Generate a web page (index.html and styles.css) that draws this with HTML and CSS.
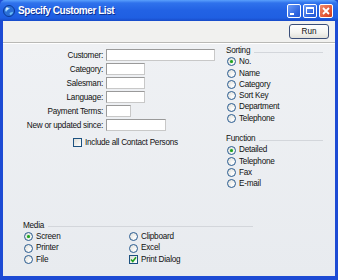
FILE: index.html
```html
<!DOCTYPE html>
<html lang="en">
<head>
  <meta charset="UTF-8" />
  <title>Specify Customer List</title>
  <link rel="stylesheet" href="styles.css">
</head>
<body>
  <div class="window">
    <div class="titlebar">
      <svg class="app-icon" width="12" height="12" viewBox="0 0 12 12">
        <circle cx="6" cy="6" r="5.5" fill="#2a6fd6" stroke="#0b3a99" stroke-width="1"/>
        <path d="M2 5 C3 3 5 2.5 7 3 C6 4.5 4 5 3 7 Z" fill="#8fd0ff"/>
        <path d="M6.5 8 C8 7 9.5 7.5 10 6.5 C10 8.5 8.5 10 7 10 Z" fill="#6cc0f5"/>
        <circle cx="4" cy="3.5" r="1.3" fill="#ffffff" opacity="0.7"/>
      </svg>
      <span class="title">Specify Customer List</span>
      <div class="caption-buttons">
        <span class="cap-btn"><span class="glyph-min"></span></span>
        <span class="cap-btn"><span class="glyph-max"></span></span>
        <span class="cap-btn close">
          <svg width="8" height="8" viewBox="0 0 8 8"><path d="M1 1 L7 7 M7 1 L1 7" stroke="#fff" stroke-width="1.8"/></svg>
        </span>
      </div>
    </div>

    <div class="client">
      <div class="toolbar">
        <button class="run">Run</button>
      </div>

      <div class="content">
        <div class="upper">
          <div class="fields">
            <div class="field-grid">
              <label>Customer:</label><input class="w-customer" type="text">
              <label>Category:</label><input class="w-short" type="text">
              <label>Salesman:</label><input class="w-short" type="text">
              <label>Language:</label><input class="w-short" type="text">
              <label>Payment Terms:</label><input class="w-tiny" type="text">
              <label>New or updated since:</label><input class="w-date" type="text">
            </div>
            <div class="check-row"><span class="checkbox"></span>Include all Contact Persons</div>
          </div>

          <div class="options">
            <div class="group">
              <div class="group-head">Sorting<span class="rule"></span></div>
              <div class="opt"><span class="radio on"></span>No.</div>
              <div class="opt"><span class="radio"></span>Name</div>
              <div class="opt"><span class="radio"></span>Category</div>
              <div class="opt"><span class="radio"></span>Sort Key</div>
              <div class="opt"><span class="radio"></span>Department</div>
              <div class="opt"><span class="radio"></span>Telephone</div>
            </div>
            <div class="group function">
              <div class="group-head">Function<span class="rule"></span></div>
              <div class="opt"><span class="radio on"></span>Detailed</div>
              <div class="opt"><span class="radio"></span>Telephone</div>
              <div class="opt"><span class="radio"></span>Fax</div>
              <div class="opt"><span class="radio"></span>E-mail</div>
            </div>
          </div>
        </div>

        <div class="media">
          <div class="group-head">Media<span class="rule"></span></div>
          <div class="media-grid">
            <div class="opt"><span class="radio on"></span>Screen</div>
            <div class="opt"><span class="radio"></span>Clipboard</div>
            <div class="opt"><span class="radio"></span>Printer</div>
            <div class="opt"><span class="radio"></span>Excel</div>
            <div class="opt"><span class="radio"></span>File</div>
            <div class="opt"><span class="checkbox checked">
              <svg width="7" height="7" viewBox="0 0 7 7"><path d="M1 3.5 L2.8 5.5 L6 1.2" fill="none" stroke="#21a121" stroke-width="1.6"/></svg>
            </span>Print Dialog</div>
          </div>
        </div>
      </div>
    </div>
  </div>
</body>
</html>
```

FILE: styles.css
```css
body {
  margin: 0;
  font-family: "Liberation Sans", Arial, sans-serif;
  font-size: 8.2px;
  letter-spacing: -0.25px;
  color: #111;
}
.window {
  width: 338px;
  height: 280px;
  display: flex;
  flex-direction: column;
  background: #1d4bd4;
}
.titlebar {
  height: 21px;
  display: flex;
  align-items: center;
  padding: 0 5px 0 3px;
  background: linear-gradient(#5aa0fc 0, #2f72ec 3px, #2262e4 50%, #1f5fe2 85%, #174ac8 100%);
  border-radius: 5px 5px 0 0;
}
.app-icon {
  flex: none;
  margin-right: 3px;
}
.title {
  flex: 1;
  color: #fff;
  font-weight: bold;
  font-size: 10px;
  letter-spacing: -0.45px;
  text-shadow: 1px 1px 0 #0c2f8f;
}
.caption-buttons {
  display: flex;
  gap: 2px;
}
.cap-btn {
  width: 14px;
  height: 14px;
  box-sizing: border-box;
  border: 1px solid #fff;
  border-radius: 2px;
  background: linear-gradient(135deg, #6d9cf6, #2d64df 70%, #2357d2);
  display: flex;
  align-items: center;
  justify-content: center;
}
.cap-btn.close {
  background: linear-gradient(135deg, #f08c6e, #e0502f 70%, #c93c1f);
}
.glyph-min {
  width: 4px;
  height: 2px;
  background: #fff;
  margin: 6px 4px 0 0;
}
.glyph-max {
  width: 8px;
  height: 7px;
  box-sizing: border-box;
  border: 1px solid #fff;
  border-top-width: 2px;
}

.client {
  flex: 1;
  display: flex;
  flex-direction: column;
  margin: 0 3px 4px;
  background: #eceef2;
}
.toolbar {
  height: 22px;
  box-sizing: border-box;
  padding: 3px 6px 0 0;
  display: flex;
  justify-content: flex-end;
  align-items: flex-start;
  background: #f1f1ef;
  border-bottom: 1px solid #b9b9b6;
}
.run {
  width: 40px;
  height: 15px;
  padding: 0;
  font: inherit;
  color: #111;
  border: 1px solid #3a4e78;
  border-radius: 3px;
  background: linear-gradient(#ffffff, #f3f3ef 60%, #e2e1da);
}

.content {
  flex: 1;
  display: flex;
  flex-direction: column;
  padding-top: 1px;
  background: linear-gradient(#eff1f4, #e8ebef);
  border-top: 1px solid #fff;
}
.upper {
  display: flex;
}
.fields {
  width: 223px;
  padding-top: 4px;
}
.field-grid {
  display: grid;
  grid-template-columns: 100px auto;
  column-gap: 3px;
  row-gap: 2px;
  align-items: center;
}
.field-grid label {
  text-align: right;
}
.field-grid input {
  height: 12px;
  box-sizing: border-box;
  margin: 0;
  padding: 0;
  border: 1px solid #9a9a9a;
  border-right-color: #c8c8c8;
  border-bottom-color: #c8c8c8;
  background: #fff;
}
.w-customer { width: 109px; }
.w-short { width: 39px; }
.w-tiny { width: 25px; }
.w-date { width: 60px; }

.check-row {
  display: flex;
  align-items: center;
  gap: 3px;
  margin: 6px 0 0 70px;
  line-height: 11px;
}
.checkbox {
  width: 9px;
  height: 9px;
  box-sizing: border-box;
  border: 1px solid #1c5180;
  background: linear-gradient(135deg, #dcdcd7, #fff);
  display: flex;
  align-items: center;
  justify-content: center;
}

.options {
  width: 97px;
}
.group-head {
  display: flex;
  align-items: center;
  gap: 4px;
  line-height: 11.3px;
}
.rule {
  flex: 1;
  margin-top: 3px;
  border-top: 1px solid #d3d6db;
}
.opt {
  display: flex;
  align-items: center;
  gap: 3px;
  line-height: 11.3px;
  padding-left: 1px;
}
.radio {
  width: 9px;
  height: 9px;
  box-sizing: border-box;
  border: 1px solid #2a5c91;
  border-radius: 50%;
  background: radial-gradient(circle at 70% 70%, #fff, #dcdcd6);
  display: flex;
  align-items: center;
  justify-content: center;
}
.radio.on::after {
  content: "";
  width: 3px;
  height: 3px;
  border-radius: 50%;
  background: #22a122;
  box-shadow: 0 0 1px #5ccc5c;
}
.function {
  margin-top: 9px;
}

.media {
  margin-top: auto;
  width: 230px;
  padding: 0 0 11px 20px;
}
.media-grid {
  display: grid;
  grid-template-columns: 105px auto;
}
```
